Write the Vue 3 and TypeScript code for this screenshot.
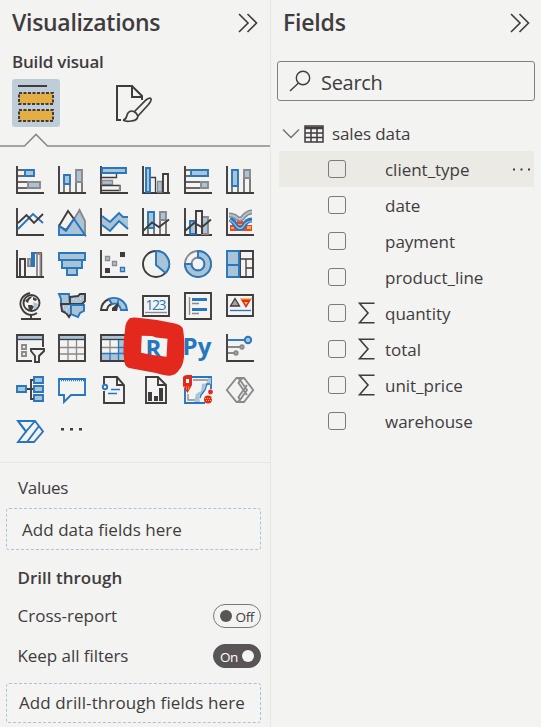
<script setup lang="ts">
interface Field {
  name: string
  numeric?: boolean
  active?: boolean
}

const fields: Field[] = [
  { name: 'client_type', active: true },
  { name: 'date' },
  { name: 'payment' },
  { name: 'product_line' },
  { name: 'quantity', numeric: true },
  { name: 'total', numeric: true },
  { name: 'unit_price', numeric: true },
  { name: 'warehouse' },
]

const axis = '<path class="k2" d="M1 0V27H28"/>'
const page = '<path class="k2 w" d="M4 1H16L24 9V27H4Z"/><path class="k2" d="M16 1V9H24"/>'

// Glyph markup on a 28 x 28 grid. k = dark, b = blue, g = grey; l = light fill.
const visuals: string[] = [
  axis + '<path class="k1" d="M2 4H8M2 10H8M2 16H11M2 22H11"/><path class="b2 l" d="M9 4H18V10H9Z"/><path class="g2 l" d="M12 16H24V22H12Z"/>',
  axis + '<path class="k1" d="M6 19V26M12 19V26M18 17V26M24 17V26"/><path class="b2 l" d="M6 9H12V18H6Z"/><path class="g2 l" d="M18 4H24V16H18Z"/>',
  axis + '<path class="g1 l" d="M2 14.5H12.500V18.500H2Z"/><path class="k1" d="M2 11.500H16.500V8M2 19.500H20V24.500H2"/><path class="g1" d="M19.500 25V19.500"/><path class="b2 l" d="M2 2H26V7H2Z"/>',
  axis + '<path class="b2 l" d="M4 2H8V26H4Z"/><path class="k1" d="M9 11.500H13.500V26"/><path class="g1 l" d="M15.500 15.500H20V26H15.500Z"/><path class="k2" d="M21 26V8H26V26"/>',
  axis + '<path class="k1" d="M2 4H6M2 10H6M2 16H16M2 22H16"/><path class="b2 l" d="M7 4H24V10H7Z"/><path class="g2 l" d="M17 16H24V22H17Z"/>',
  axis + '<path class="k1" d="M6 20V26M12 20V26M18 12V26M24 12V26"/><path class="b2 l" d="M6 4H12V20H6Z"/><path class="g2 l" d="M18 4H24V12H18Z"/>',
  axis + '<path class="b2 n" d="M2 21L17 6L27 15"/><path class="k2 n" d="M2 15L10.500 7L18 15L27 6"/>',
  '<path class="g2 l" d="M15 13L21.500 2L27 13V27Z"/><path class="k2 w" d="M1 18L10 3L16 11L8 22Z"/><path class="b2 l" d="M1 18L8 23L16 11L27 27H1Z"/>',
  axis + '<path class="l" d="M2 8L10 14L19 5L23 9H28V21L19 14L10 23L2 17Z"/><path class="b2 n" d="M2 8L10 14L19 5L23 9H28M2 17L10 23L19 13L28 21"/>',
  axis + '<path class="k1" d="M6 21V26M12 21V26M18 13V26M24 13V26"/><path class="b2 l" d="M6 4H12V20H6Z"/><path class="g2 l" d="M18 4H24V12H18Z"/><path class="k2 n" d="M1 23L10 14.500L17 19L27 11.500"/>',
  axis + '<path class="b2 l" d="M6 13H12V26H6Z"/><path class="g2 l" d="M18 9H24V26H18Z"/><path class="k2 w" d="M12 26V3H18V26"/><path class="k2 n" d="M1 23L10 15L18 19L27 11.500"/>',
  axis + '<path fill="#e8462f" d="M4 17H26V23H4Z"/><path fill="#f0b33b" d="M5 19H8V21H5ZM21 18H25V21H21ZM11 13H17V17H11Z"/><path fill="none" stroke="#2876bd" stroke-width="5" d="M4 11Q8 13 10 18Q14 23 18 18Q20 12 26 12"/><path fill="none" stroke="#a9c3d7" stroke-width="1.200" d="M4 12Q8 14 11 19Q14 22 17 19Q20 13 26 13"/><path fill="#e8462f" d="M11 13H17V16H11Z"/><path fill="none" stroke="#8c898a" stroke-width="5" d="M3 7Q8 7 11 10Q15 13 18 8Q22 4 26 4"/><path fill="none" stroke="#a9c3d7" stroke-width="2" d="M3 7Q8 7 11 10Q15 13 18 8Q22 4 26 4"/>',
  axis + '<path class="k2 w" d="M4 26V9H9V26"/><path class="g2 l" d="M12 9H15V16H12Z"/><path fill="#2876bd" d="M15 2H19V17H15Z"/><path class="k1" d="M19 3H26M25.500 3V26"/><path class="g2 w" d="M21 26V4H24.500V26"/>',
  '<path class="b2 l" d="M1 3H27V10H1ZM4 10H24V18H4ZM9 18H19V25H9Z"/>',
  axis + '<path class="d" d="M20 2H25V7H20ZM5 18H10V23H5Z"/><path class="g1 l" d="M5.500 6.500H9.500V10.500H5.500ZM12.500 11.500H16.500V15.500H12.500Z"/><path class="b1 l" d="M20.500 17.500H24.500V21.500H20.500Z"/>',
  '<circle class="k2 w" cx="14" cy="14" r="13"/><path class="b2 l" d="M14 1A13 13 0 0 1 23.500 23L14 15Z"/>',
  '<circle class="g2 w" cx="14" cy="14" r="13"/><circle class="g2 w" cx="14" cy="14" r="6.500"/><path class="b2 l" d="M14 1A13 13 0 1 1 1 14H7.500A6.500 6.500 0 1 0 14 7.500Z"/>',
  '<path class="k2 w" d="M14 1H27V27H14Z"/><path class="k1" d="M14 9H27M20 9V27M20 18H27"/><path class="b2 l" d="M1 1H13V27H1ZM1 15H13"/>',
  '<path class="k2" d="M5 27H25M15 23V27"/><circle class="k2 w" cx="15.500" cy="11" r="8"/><path class="d" d="M9 9L13 5L17 4L13 8L12 11ZM17 5L21 7L20 9L17 8ZM12 13L16 13L18 15L15 19H13Z"/><path class="l" d="M17 10L22 12L20 17H18Z"/><path class="k2 n" d="M14 1C6 3 2 10 6 17C10 24 17 24 21 21"/>',
  '<path class="b2 l" d="M1 2H11L12 13L3 13L3 7Z"/><path class="k2 l" d="M12 5L20 4L22 2H27V9L24 12H12Z"/><path fill="#a9c3d7" stroke="#403b3d" stroke-width="2" d="M3 12H13L14 20L11 25L8 21L4 19Z"/><path class="b2 l" d="M13 13H26V19L22 21L20 25L13 22Z"/><path class="wd" d="M5 15H6M8 17H9M10 15H11M18 8H19M22 7H23M15 7H16M8 20H9"/>',
  '<path class="k2 w" d="M1 18A13 13 0 0 1 9 7L12 12A7 7 0 0 0 7 18Z"/><path class="b2 l" d="M9 7A13 13 0 0 1 27 18H21A7 7 0 0 0 12 12Z"/><path class="b1" d="M19 6L17 12"/><path class="d" d="M19 10L17 19H12V16Z"/>',
  '<path class="k2 w" d="M1 4H27V24H1Z"/><text x="3.500" y="18" class="num" textLength="21">123</text><path class="g1" d="M3 20.500H25"/>',
  '<path class="k2 w" d="M1 1H27V27H1Z"/><path class="g1" d="M5.500 5V23M8 11.500H15M8 21.500H15"/><path fill="#2876bd" d="M8 6H23V9H8ZM8 16H23V19H8Z"/><path class="wd" d="M9 9.500H23M9 19.500H23"/>',
  '<path class="k2 w" d="M1 3H27V24H1Z"/><path class="k1 gf" d="M4.500 14L9 6.500L13.500 14Z"/><path fill="#e3281d" d="M14 6H26L20 16Z"/><path fill="#f4c052" d="M14 6H26L25 7.500H15ZM18 10H22L20 13Z"/><path class="b1" d="M4 18.500H25"/>',
  '<path class="k2 w" d="M16 27H1V1H27V13"/><path class="l" d="M2 2H26V5H2Z"/><path class="k1" d="M2 5.500H26"/><path class="g2" d="M6 11H10V15H6ZM6 18H10V22H6Z"/><path class="k2 w" d="M15 15H28V17L23 22V28H19V22L15 17Z"/>',
  '<path class="k2 w" d="M1 1H27V27H1Z"/><path class="l" d="M2 2H26V5H2Z"/><path class="k1" d="M2 5.500H26"/><path class="g1" d="M2 13.500H26M2 20H26M10 6V26M18.500 6V26"/>',
  '<path class="k2 w" d="M1 1H27V27H1Z"/><path class="l" d="M2 2H26V5H2ZM2 19H26V26H2ZM18 6H26V20H18Z"/><path class="k1" d="M2 5.500H26"/><path class="g1" d="M2 13.500H18M10 6V20"/><path class="b1" d="M2 19.500H26M18.500 6V26M10 20V26M18 13.500H26"/>',
  '<text x="3.500" y="22.500" class="code">R</text>',
  '<text x="-1.500" y="20.500" class="code" textLength="29">Py</text>',
  axis + '<path class="b2" d="M2 6H19"/><circle class="b2 l" cx="22" cy="6" r="3.200"/><path class="g2" d="M2 13H14M2 19H8"/><circle class="g2 l" cx="16" cy="13" r="1.700"/><circle class="g2 l" cx="10" cy="19" r="1.700"/>',
  '<path class="k2" d="M11 13H17M18 4H15V23H18"/><path class="b2 l" d="M1 10H10V16H1ZM18 1H27V7H18ZM18 10H27V16H18ZM18 19H27V25H18Z"/>',
  '<path class="b2 w" d="M1 3H27V19H13L6 26V19H1Z"/><path class="b1" stroke-dasharray="1 1" d="M3 4.500H26"/>',
  '<path class="k2 w" d="M4 8V1H17L24 9V27H4V15"/><path class="k2" d="M17 1V9H24"/><circle class="b2 w" cx="5" cy="11" r="2.200"/><path class="b1" d="M11 13.500H20M8 17.500H17"/>',
  page + '<path class="d" d="M6 16H10V25H6ZM12 20H16V25H12ZM17 12H21V25H17Z"/>',
  '<path class="b2 w" d="M1 1H27V13M21 27H1V1"/><path class="g1" d="M9 4H24V8M4 18V24H11"/><path class="l" d="M27 2V8L21 10L20 17L15 20L16 26H10L12 18L17 15L18 8L23 7L24 2Z"/><path class="b1" d="M26 8H23L21 14L17 19L16 22"/><path fill="#e3281d" d="M-1 1Q0-1 3-1H8V9L3.500 17L-1 10Z"/><path fill="#fff" d="M2 3H5V7H2Z"/><path class="dots" d="M0 11H6M2 13H6"/><circle cx="26.500" cy="16" r="2.400" fill="#e3281d"/><circle cx="24" cy="23.500" r="4" fill="#e3281d"/><path class="dots" d="M21 22.500H28M22 24.500H27"/>',
  '<path class="g2 w" d="M.8 14L10.500 2H18L27.200 14L18 26H10.500Z"/><path class="g2 n" d="M10.500 2Q13 2 14 4L21 14L14 24Q13 26 10.500 26M18 2Q16 2 14 4L12.500 7L21 19M14 24L12.500 21L21 9"/>',
  '<path class="b2 w" d="M2 3H19L27 13.500L18 24H2L10 13.500Z"/><path class="b2" d="M2 3L10 13.500L19 3M11 24L23 8"/>',
  '<path class="d" d="M3 10H6V12.500H3ZM12 10H15V12.500H12ZM21 10H24V12.500H21Z"/>',
]
</script>

<template>
  <main class="app">
    <section class="panel visual-panel">
      <header class="panel-head">
        <h1 class="t-vis">Visualizations</h1>
        <svg class="collapse" width="20" height="20" viewBox="0 0 20 20"><path d="M1 1L10 10L1 19M9.500 1L18.500 10L9.500 19" /></svg>
      </header>
      <h2 class="build">Build visual</h2>
      <nav class="tabs">
        <button class="tab selected" aria-label="Build visual">
          <svg width="48" height="48" viewBox="0 0 48 48">
            <path d="M6 7H35" stroke="#403b3d" stroke-width="2" />
            <path d="M7 14H41V25H7ZM7 31H41V42H7Z" fill="#e5ae45" stroke="#403b3d" stroke-width="2" stroke-dasharray="3 1.500" />
          </svg>
        </button>
        <button class="tab" aria-label="Format visual">
          <svg width="42" height="40" viewBox="0 0 42 40" fill="none" stroke="#403b3d" stroke-width="2">
            <path d="M10 37H6V3H21L31 13V17M21 3V14H31" />
            <path d="M12 37C16 37 15 33 17 30Q20 26 25 30L27 33Q26 38 20 38Q15 39 12 37M23 29L35 17Q39 14 40 16Q41 17 37 22L27 33" stroke-width="1.700" />
          </svg>
        </button>
      </nav>
      <svg class="notch" width="270" height="15" viewBox="0 0 270 15"><path d="M0 13H24.500L36 1.500L47.500 13H270" /></svg>
      <div class="gallery">
        <svg v-for="(glyph, i) in visuals" :key="i" width="28" height="28" viewBox="0 0 28 28" v-html="glyph" />
        <svg class="marker" width="64" height="62" viewBox="0 0 64 62">
          <path fill-rule="evenodd" d="M2 13Q2 5 7 1Q11 0 17 1L34 3L52 6.500Q59 8 60 12Q62 24 61 40Q60 49 56 53Q53 58 47 58.700Q43 59 33 56L6 51Q1 49 1 42Q-.5 30 2 13ZM18.700 18.700L29 19L33 20.500L44.500 21.700L43.500 39.700Q30 38.500 18 35.700Z" />
        </svg>
      </div>
      <div class="wells">
        <h3 class="values">Values</h3>
        <div class="drop first"><span class="t-add">Add data fields here</span></div>
        <h3 class="drill">Drill through</h3>
        <div class="option"><span class="t-cross">Cross-report</span><span class="toggle"><i></i><b>Off</b></span></div>
        <div class="option"><span class="t-keep">Keep all filters</span><span class="toggle on"><b>On</b><i></i></span></div>
        <div class="drop second"><span class="t-through">Add drill-through fields here</span></div>
      </div>
    </section>

    <section class="panel field-panel">
      <header class="panel-head">
        <h1 class="t-fields">Fields</h1>
        <svg class="collapse" width="20" height="20" viewBox="0 0 20 20"><path d="M1 1L10 10L1 19M9.500 1L18.500 10L9.500 19" /></svg>
      </header>
      <div class="search">
        <svg width="22" height="22" viewBox="0 0 22 22"><circle cx="14" cy="8" r="6.700" /><path d="M9.500 13L1 21" /></svg>
        <span>Search</span>
      </div>
      <div class="source">
        <svg width="18" height="12" viewBox="0 0 18 12" fill="none" stroke="#6f6c6d" stroke-width="1.300"><path d="M1 1.500L9 9.500L17 1.500" /></svg>
        <svg width="20" height="18" viewBox="0 0 20 18" fill="none" stroke="#403b3d" stroke-width="1.500"><path d="M1 1H19V17H1ZM1 8H19M1 12.500H19M7 4V17M13 4V17" /><path d="M1 3H19" stroke-width="2.500" /></svg>
        <span>sales data</span>
      </div>
      <ul class="fields">
        <li v-for="f in fields" :key="f.name" :class="{ active: f.active }">
          <span class="check"></span>
          <span class="sigma"><svg v-if="f.numeric" width="17" height="22" viewBox="0 0 17 22"><path d="M16.500 1.200H1.500L10 11L1.500 20.800H16.500" /></svg></span>
          <span class="name">{{ f.name }}</span>
          <svg v-if="f.active" class="more" width="17" height="3" viewBox="0 0 17 3"><path d="M0 .5H2V2.500H0ZM7.500 .5H9.500V2.500H7.500ZM15 .5H17V2.500H15Z" /></svg>
        </li>
      </ul>
    </section>
  </main>
</template>

<style>
body { background: #f3f3f1; }
</style>

<style scoped>
* { box-sizing: border-box; }
.app { display: flex; width: 541px; height: 727px; overflow: hidden; background: #f3f3f1; color: #403c3e; font: 17px/24px "Open Sans", "Noto Sans", sans-serif; white-space: nowrap; }
svg { display: block; flex: none; }
h1, h2, h3, ul { margin: 0; padding: 0; font-weight: 400; list-style: none; }
.panel { display: flex; flex-direction: column; flex: none; }
.visual-panel { width: 271px; border-right: 1px solid #e7e6e1; }
.field-panel { width: 270px; }
.panel-head { display: flex; justify-content: space-between; align-items: center; height: 45px; padding: 0 12px; }
.panel-head h1 { font-size: 23px; line-height: 45px; font-weight: 600; letter-spacing: -0.3px; }
.field-panel .panel-head { padding-right: 11px; }
.panel-head .t-fields { letter-spacing: -0.2px; }
.collapse { fill: none; stroke: #403b3d; stroke-width: 1.6; }
.build { height: 34px; padding-left: 12px; font-size: 17px; line-height: 34px; font-weight: 600; letter-spacing: -0.2px; }
.tabs { display: flex; align-items: center; gap: 51px; height: 48px; padding-left: 12px; }
.tab { padding: 0; border: 0; background: none; }
.tab.selected { width: 48px; height: 48px; border-radius: 3px; background: #bfcdd8; }
.notch { margin-top: 6px; fill: none; stroke: #8a8a8b; stroke-width: 1.6; }
.gallery { position: relative; display: grid; grid-template-columns: repeat(6, 28px); grid-auto-rows: 28px; gap: 14px; height: 315px; padding: 18px 0 0 16px; }
.gallery > svg { overflow: visible; }
.gallery .marker { position: absolute; left: 123px; top: 169px; fill: #e3281d; }
.gallery :deep(path), .gallery :deep(circle) { stroke-linejoin: miter; }
.gallery :deep(.k1), .gallery :deep(.k2), .gallery :deep(.b1), .gallery :deep(.b2), .gallery :deep(.g1), .gallery :deep(.g2), .gallery :deep(.n) { fill: none; }
.gallery :deep(.k1), .gallery :deep(.k2) { stroke: #403b3d; }
.gallery :deep(.b1), .gallery :deep(.b2) { stroke: #2876bd; }
.gallery :deep(.g1), .gallery :deep(.g2) { stroke: #8c898a; }
.gallery :deep(.k1), .gallery :deep(.b1), .gallery :deep(.g1) { stroke-width: 1.3; }
.gallery :deep(.k2), .gallery :deep(.b2), .gallery :deep(.g2) { stroke-width: 1.9; }
.gallery :deep(.l) { fill: #a9c3d7; }
.gallery :deep(.w) { fill: #f3f3f1; }
.gallery :deep(.d) { fill: #403b3d; }
.gallery :deep(.gf) { fill: #a4a3a4; }
.gallery :deep(.wd) { stroke: #f3f3f1; stroke-width: 1; stroke-dasharray: 1 1; }
.gallery :deep(.dots) { stroke: #f4c052; stroke-width: 1; stroke-dasharray: 1 1; }
.gallery :deep(.num) { fill: #2876bd; font-size: 14px; }
.gallery :deep(.code) { fill: #2876bd; font-size: 24px; font-weight: 700; }
.wells { height: 265px; border-top: 1px solid #e7e6e1; }
.values { height: 45px; padding-left: 18px; font-size: 17px; line-height: 50px; letter-spacing: -0.3px; }
.drop { display: flex; align-items: center; width: 255px; margin-left: 6px; border: 1px dashed #a9c3d7; border-radius: 3px; background: #f4f4f2; }
.first { height: 42px; padding: 1px 0 0 15px; }
.second { height: 40px; margin-top: 7px; padding-left: 12px; letter-spacing: 0.1px; }
.t-add { letter-spacing: 0.05px; }
.drill { height: 46px; padding-left: 17.5px; font-size: 17px; line-height: 56px; font-weight: 600; }
.t-keep { letter-spacing: -0.05px; }
.option { display: flex; align-items: center; justify-content: space-between; height: 40px; padding: 0 9px 0 17.5px; }
.toggle { display: flex; align-items: center; justify-content: space-between; width: 48px; height: 24px; padding: 0 6px; border: 1px solid #7b7879; border-radius: 12px; }
.toggle i { width: 12px; height: 12px; border-radius: 50%; background: #595455; }
.toggle b { padding-top: 1px; font-size: 13.5px; font-weight: 400; letter-spacing: -0.4px; }
.toggle.on { border-color: #595455; background: #595455; color: #fff; }
.toggle.on i { background: #f4f4f2; }
.search { display: flex; align-items: center; gap: 10px; width: 258px; height: 40px; margin: 16px 0 0 6px; padding-left: 11px; border: 1px solid #828081; border-radius: 3px; font-size: 20px; }
.search span { padding-top: 3px; letter-spacing: -0.3px; }
.search svg { fill: none; stroke: #403b3d; stroke-width: 1.4; }
.source { display: flex; align-items: center; height: 50px; padding: 15px 0 0 11px; line-height: 35px; letter-spacing: -0.1px; }
.source svg + svg { margin: 0 8px 0 4px; }
.fields li { display: flex; align-items: center; width: 255px; height: 36px; margin-left: 8px; padding-left: 49px; }
.fields li.active { background: #ebeae5; }
.name { padding-top: 2px; letter-spacing: -0.02px; }
.check { width: 18px; height: 18px; border: 1px solid #7d7a7b; border-radius: 3px; }
.sigma { width: 39px; padding-left: 12px; }
.sigma path { fill: none; stroke: #403b3d; stroke-width: 1.6; }
.more { margin: 0 4px 0 auto; fill: #403b3d; }
</style>
